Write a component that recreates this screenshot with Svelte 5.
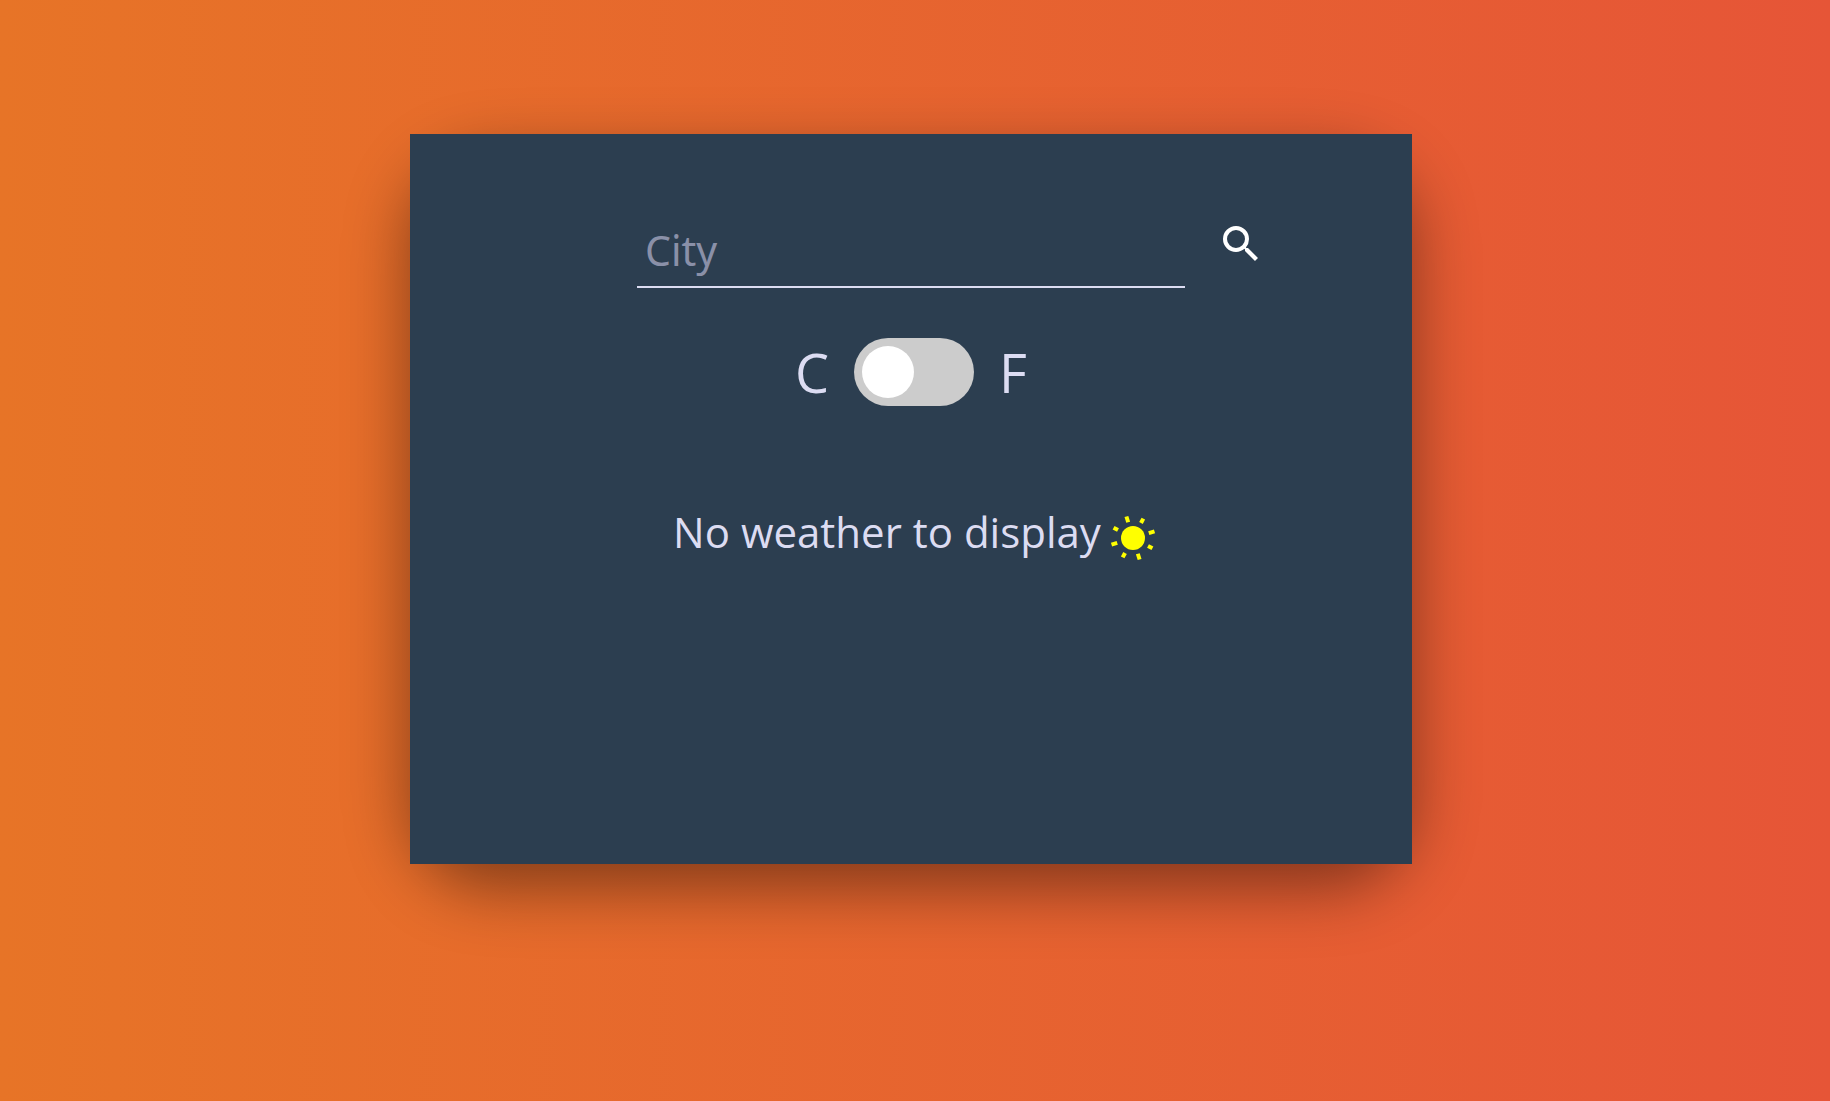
<script>
  let fahrenheit = $state(false);
  let city = $state('');
  const rays = [0, 45, 90, 135, 180, 225, 270, 315];
</script>

<main>
  <div class="shade">
    <section class="card">
      <form onsubmit={(e) => e.preventDefault()}>
        <input class="city" type="text" placeholder="City" aria-label="City" bind:value={city} />
        <button class="search" type="submit" aria-label="Search">
          <svg viewBox="0 0 24 24" width="48" height="48" fill="#fff" aria-hidden="true">
            <path d="M15.5 14h-.79l-.28-.27A6.47 6.47 0 0 0 16 9.5 6.5 6.5 0 1 0 9.5 16c1.61 0 3.09-.59 4.23-1.57l.27.28v.79l5 4.99L20.49 19l-4.99-5zm-6 0a4.5 4.5 0 1 1 0-9 4.5 4.5 0 0 1 0 9z" />
          </svg>
        </button>
      </form>
      <label class="units">
        <span>C</span>
        <input type="checkbox" role="switch" aria-label="Use Fahrenheit" bind:checked={fahrenheit} />
        <span>F</span>
      </label>
      <p class="message">
        No weather to display
        <svg viewBox="-24 -24 48 48" width="48" height="48" fill="#ff0" aria-hidden="true">
          <circle r="12" />
          {#each rays as angle, i}
            <rect x="-2" y={i % 2 ? -22 : -22.5} width="4" height={i % 2 ? 5 : 6} transform={`rotate(${angle - 17})`} />
          {/each}
        </svg>
      </p>
    </section>
  </div>
</main>

<style>
  :global(body) {
    margin: 0;
  }
  main {
    box-sizing: border-box;
    min-height: 100vh;
    padding: 134px 8px 134px 0;
    background: linear-gradient(to right, #e77427, #e65537);
    color: #dcdcf2;
    font-family: 'Open Sans', 'Noto Sans', sans-serif;
  }
  .shade {
    width: 55%;
    min-width: 620px;
    margin: 0 auto;
    border-radius: 80px;
    box-shadow: 0 24px 64px rgba(0, 0, 0, 0.43);
  }
  .card {
    box-sizing: border-box;
    min-height: 730px;
    padding: 80px 32px;
    background: #2c3e50;
  }
  form {
    display: grid;
    grid-template-columns: 1fr minmax(0, 548px) 1fr;
    column-gap: 32px;
  }
  .city {
    grid-column: 2;
    box-sizing: border-box;
    width: 100%;
    height: 74px;
    padding: 0 8px;
    border: 0;
    border-bottom: 2px solid #dcdcf2;
    outline: 0;
    background: transparent;
    color: inherit;
    font: 41px 'Noto Sans', sans-serif;
  }
  .city::placeholder {
    color: #8a90a8;
    opacity: 1;
  }
  .search {
    justify-self: start;
    align-self: start;
    margin-top: 6px;
    padding: 0;
    border: 0;
    background: none;
    cursor: pointer;
  }
  .search svg {
    display: block;
  }
  .units {
    display: flex;
    align-items: center;
    justify-content: center;
    gap: 25px;
    margin-top: 50px;
    font-size: 54px;
    line-height: 68px;
  }
  .units input {
    appearance: none;
    width: 120px;
    height: 68px;
    margin: 0;
    padding: 8px;
    box-sizing: border-box;
    border-radius: 34px;
    background: #ccc;
    cursor: pointer;
  }
  .units input::before {
    content: '';
    display: block;
    width: 52px;
    height: 52px;
    border-radius: 50%;
    background: #fff;
  }
  .units input:checked::before {
    margin-left: auto;
  }
  .message {
    display: flex;
    align-items: center;
    justify-content: center;
    gap: 8px;
    margin: 94px 0 0;
    padding-left: 8px;
    font-size: 42px;
    line-height: 64px;
  }
  .message svg {
    margin-top: 12px;
  }
</style>
